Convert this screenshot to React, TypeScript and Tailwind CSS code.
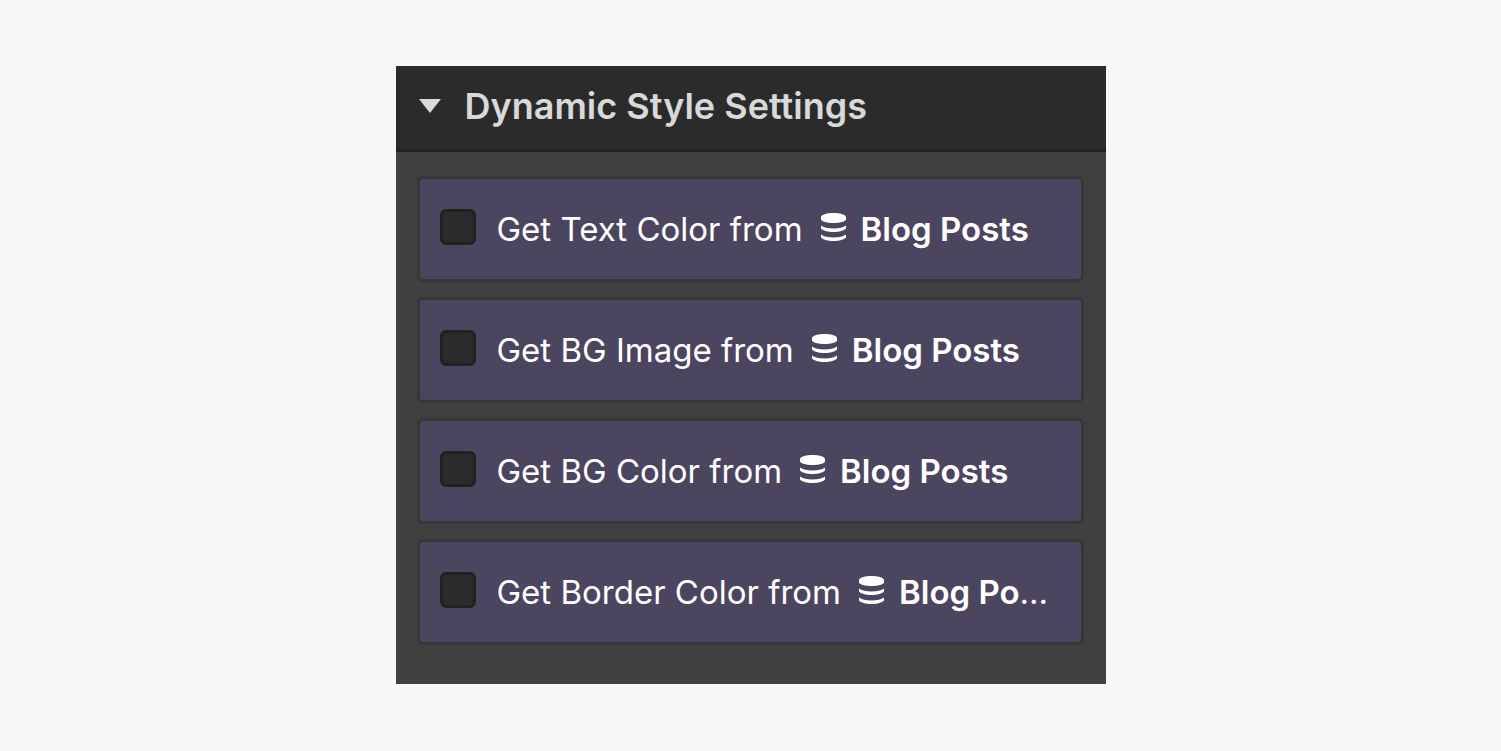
const settings = [
  { id: 'text-color', label: 'Get Text Color from', source: 'Blog Posts' },
  { id: 'bg-image', label: 'Get BG Image from', source: 'Blog Posts' },
  { id: 'bg-color', label: 'Get BG Color from', source: 'Blog Posts' },
  { id: 'border-color', label: 'Get Border Color from', source: 'Blog Posts' },
];

const CollectionIcon = () => (
  <svg viewBox="0 0 25 28" className="inline-block align-baseline w-[25px] h-7 ml-[18px] mr-[15px]" fill="#fff" aria-hidden="true">
    <path d="M0 3.500C1.500 1.300 6 0 12.500 0S23.500 1.300 25 3.500v3.300C23.500 8.800 19 10 12.500 10S1.500 8.800 0 6.800Z" />
    <path d="M0 12.500c2.500 2 7 3 12.500 3s10-1 12.500-3v3c-2 2.200-6.500 3.500-12.500 3.500S2 17.700 0 15.500Z" />
    <path d="M0 21.500c2.500 2 7 3 12.500 3s10-1 12.500-3v3c-2 2.200-6.500 3.500-12.500 3.500S2 26.700 0 24.500Z" />
  </svg>
);

export default function App() {
  return (
    <main className="min-h-screen flex items-center justify-center pb-0.5 bg-[#f5f7f9] font-['Inter',sans-serif]">
      <section className="w-full max-w-[710px] bg-[#404040]">
        {/* Header */}
        <h2>
          <button type="button" aria-expanded="true" className="w-full h-[86px] flex items-center gap-6 px-[23px] pb-0.5 bg-[#2b2b2b] border-b-3 border-[#222222] text-[#d9d9d9] text-4xl font-semibold">
            <svg viewBox="0 0 22 14" className="w-[22px] h-[14px]" fill="currentColor" aria-hidden="true">
              <path d="M0 0h22L11 14Z" />
            </svg>
            Dynamic Style Settings
          </button>
        </h2>

        {/* Settings list */}
        <div className="flex flex-col gap-[15px] pt-6 pb-[39px] pl-[21px] pr-[22px]">
          {settings.map((setting) => (
            <label key={setting.id} className="h-[106px] flex items-center gap-[21px] pl-5 pr-7 rounded-md border-3 border-[#373737] bg-[#4c455f] text-white text-[33px]">
              <input type="checkbox" className="appearance-none size-9 shrink-0 mb-1 rounded-md border-3 border-[#212121] bg-[#2b2b2b] checked:bg-[#6b5fa0]" />
              <span className="pt-0.5 truncate">
                {setting.label}
                <CollectionIcon />
                <span className="font-semibold">{setting.source}</span>
              </span>
            </label>
          ))}
        </div>
      </section>
    </main>
  );
}
